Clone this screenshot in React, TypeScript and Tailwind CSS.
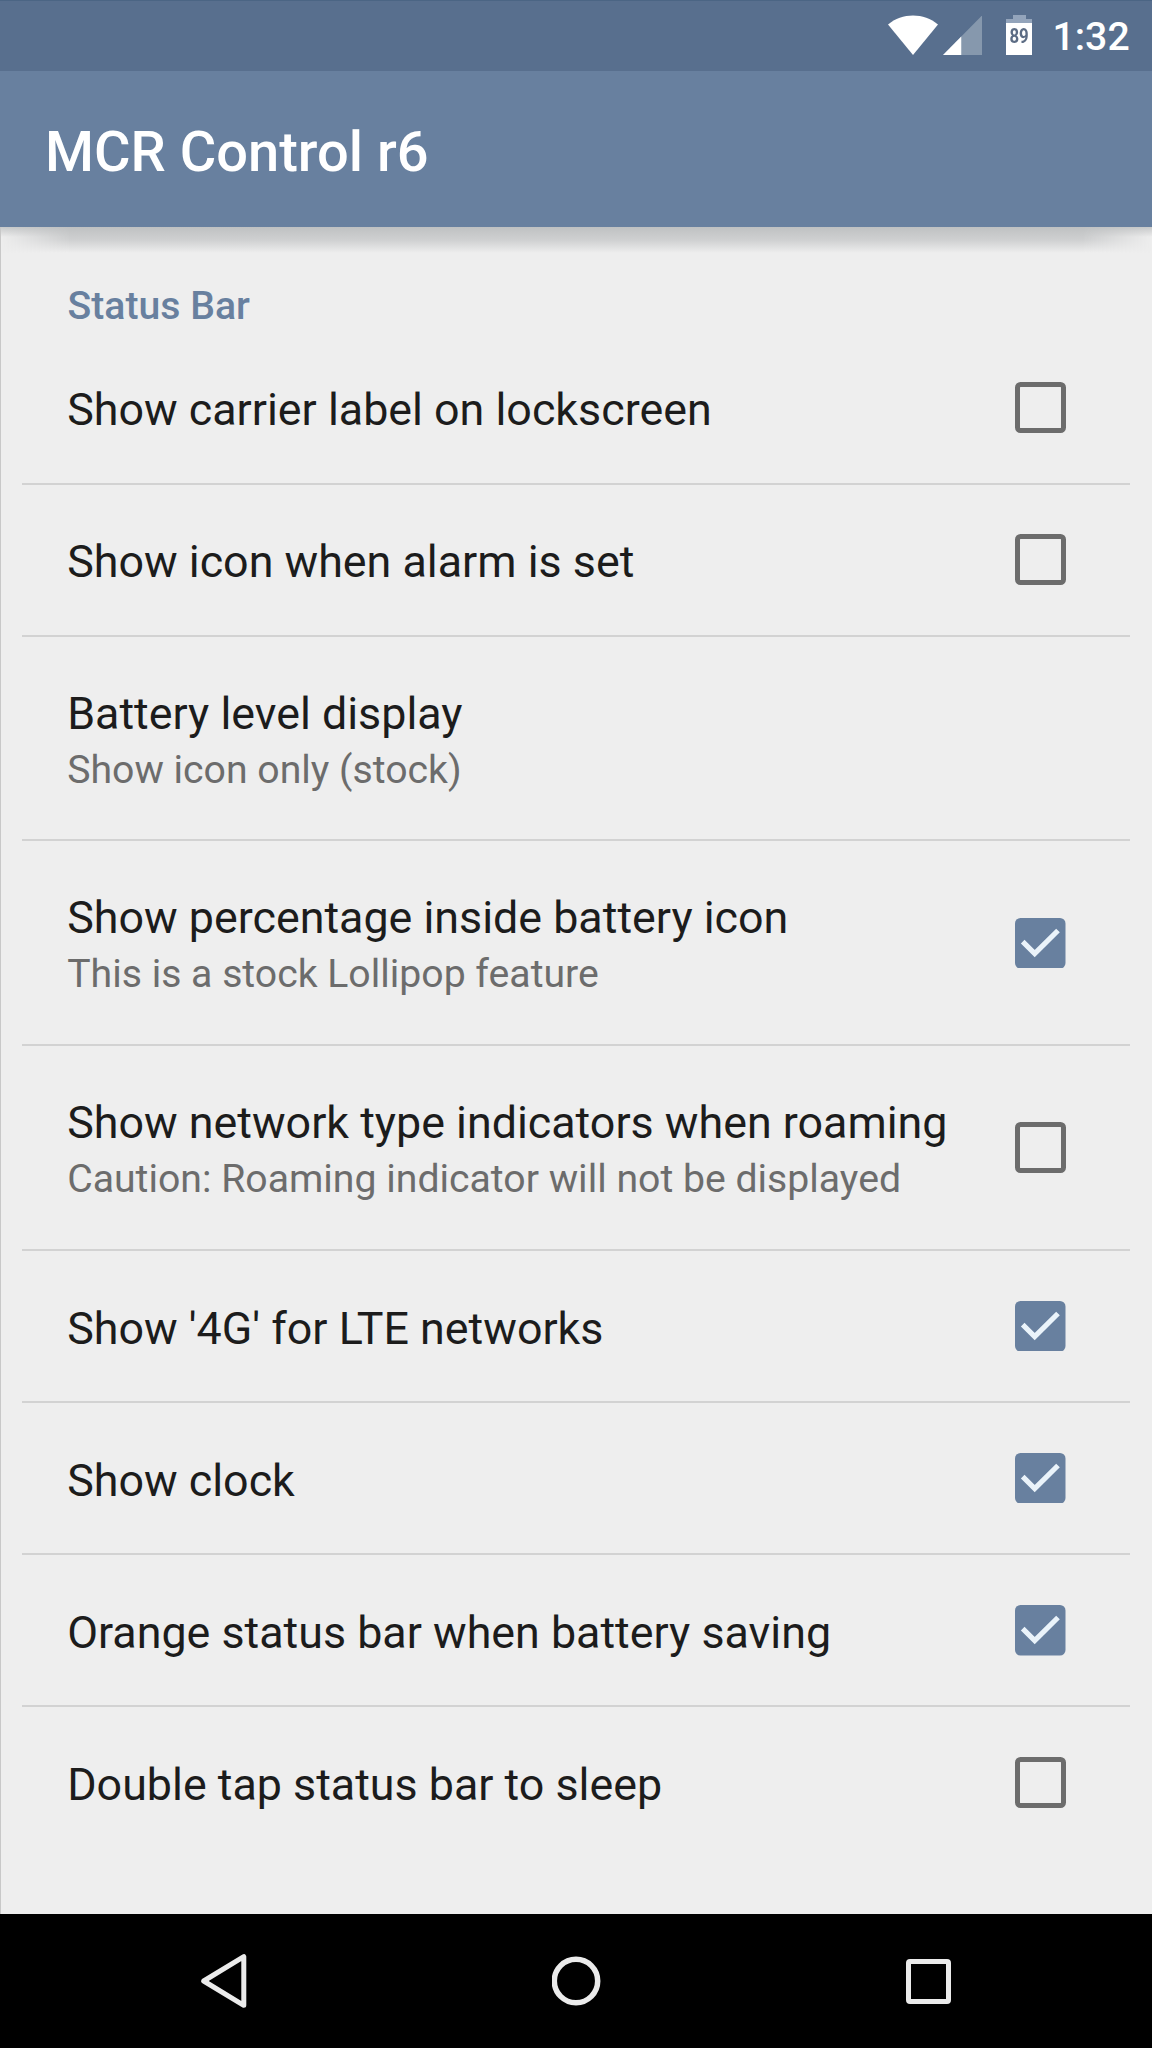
type Setting = {
  title: string;
  summary?: string;
  checked?: boolean;
};

const settings: Setting[] = [
  { title: "Show carrier label on lockscreen", checked: false },
  { title: "Show icon when alarm is set", checked: false },
  { title: "Battery level display", summary: "Show icon only (stock)" },
  { title: "Show percentage inside battery icon", summary: "This is a stock Lollipop feature", checked: true },
  {
    title: "Show network type indicators when roaming",
    summary: "Caution: Roaming indicator will not be displayed",
    checked: false,
  },
  { title: "Show '4G' for LTE networks", checked: true },
  { title: "Show clock", checked: true },
  { title: "Orange status bar when battery saving", checked: true },
  { title: "Double tap status bar to sleep", checked: false },
];

function Checkbox({ checked }: { checked: boolean }) {
  if (!checked) {
    return <span className="block size-[50.5px] shrink-0 rounded-[5.5px] border-[5.5px] border-[#6c6c6c]" />;
  }
  return (
    <svg className="block size-[50.5px] shrink-0" viewBox="0 0 50.5 50.5">
      <rect width="50.5" height="50.5" rx="5.5" fill="#68809f" />
      <path d="M7.7 23.7 19.7 35.5 43 12.5" fill="none" stroke="#eaf3fa" strokeWidth="5.2" />
    </svg>
  );
}

function Row({ item, last }: { item: Setting; last: boolean }) {
  return (
    <li
      className={`mr-[22.5px] ml-[22px] flex items-center justify-between border-b-2 pr-[64px] pl-[45.2px] ${
        item.summary ? "h-[204.8px]" : "h-[152.1px]"
      } ${last ? "border-transparent" : "border-[#d2d2d2]"}`}
    >
      <div className={`whitespace-nowrap ${item.summary ? "" : "pt-[5.5px]"}`}>
        <div className="text-[44.8px] leading-[64px] text-[#1c1c1c]">{item.title}</div>
        {item.summary && <div className="text-[39.2px] leading-[49px] text-[#6c6c6c]">{item.summary}</div>}
      </div>
      {item.checked !== undefined && <Checkbox checked={item.checked} />}
    </li>
  );
}

function StatusBar() {
  return (
    <div className="flex h-[71px] items-start border-t border-[#4b6584] bg-[#586f8e] pl-[887px]">
      <svg className="mt-[13px] h-[42px] w-[52px]" viewBox="0 0 52 42">
        <path d="M1 10.5C15-1.5 37-1.5 51 10.5L26 41Z" fill="#fff" />
      </svg>
      <svg className="mt-[14px] ml-[3.5px] h-[40px] w-[39.5px]" viewBox="0 0 40 40" preserveAspectRatio="none">
        <path d="M40 0V40H0Z" fill="#8698ad" />
        <path d="M18.5 21.5V40H0Z" fill="#fff" />
      </svg>
      <div className="mt-[13.5px] ml-[24px] flex w-[26px] flex-col items-center">
        <div className="h-[4px] w-[13px] bg-[#93a4bb]" />
        <div className="h-[4px] w-[26px] bg-[#93a4bb]" />
        <div className="flex h-[32.5px] w-[26px] items-center justify-center bg-white pb-[5px]">
          <span className="scale-x-[0.8] text-[21px] leading-none font-bold text-[#5c6c84]">89</span>
        </div>
      </div>
      <span className="mt-[9px] ml-[20.5px] text-[39.2px] leading-[55px] font-medium text-white">1:32</span>
    </div>
  );
}

function NavBar() {
  return (
    <nav className="flex h-[134px] items-center justify-between bg-black pr-[201.5px] pl-[200px]">
      <svg className="h-[80px] w-[48px]" viewBox="0 0 48 80" fill="none" stroke="#ebebeb" strokeWidth="5" strokeLinejoin="round">
        <path d="M43.8 15.7V64.3L3.7 40Z" />
      </svg>
      <svg className="h-[50px] w-[50px]" viewBox="0 0 50 50" fill="none" stroke="#ebebeb" strokeWidth="5.5">
        <circle cx="24" cy="25" r="21.7" />
      </svg>
      <span className="block size-[45px] rounded-[4px] border-[5.5px] border-[#ebebeb]" />
    </nav>
  );
}

export default function App() {
  return (
    <div className="flex h-[2048px] w-[1152px] flex-col overflow-hidden bg-[#eeeeee] font-['Roboto',sans-serif]">
      <StatusBar />
      <header className="flex h-[156px] shrink-0 items-center bg-[#68809f] pt-[5px] pl-[45px]">
        <h1 className="text-[56px] leading-[76px] font-medium whitespace-nowrap text-white">MCR Control r6</h1>
      </header>
      <main className="relative flex-1 border-l border-[#c8c8c8]">
        <div className="absolute inset-x-0 top-0 h-[10px] bg-linear-to-b from-[#bfc1c2] to-[#eeeeee] opacity-80" />
        <div className="absolute inset-x-0 top-0 h-[26px] bg-linear-to-b from-[#bfc1c2] via-[#cfd0d1] to-[#eeeeee] mask-x-from-94%" />
        <h2 className="relative ml-[66.5px] h-[105.5px] pt-[54px] text-[39.2px] leading-[50px] font-medium text-[#68809f]">
          Status Bar
        </h2>
        <ul className="-ml-px">
          {settings.map((item, i) => (
            <Row key={item.title} item={item} last={i === settings.length - 1} />
          ))}
        </ul>
      </main>
      <NavBar />
    </div>
  );
}
